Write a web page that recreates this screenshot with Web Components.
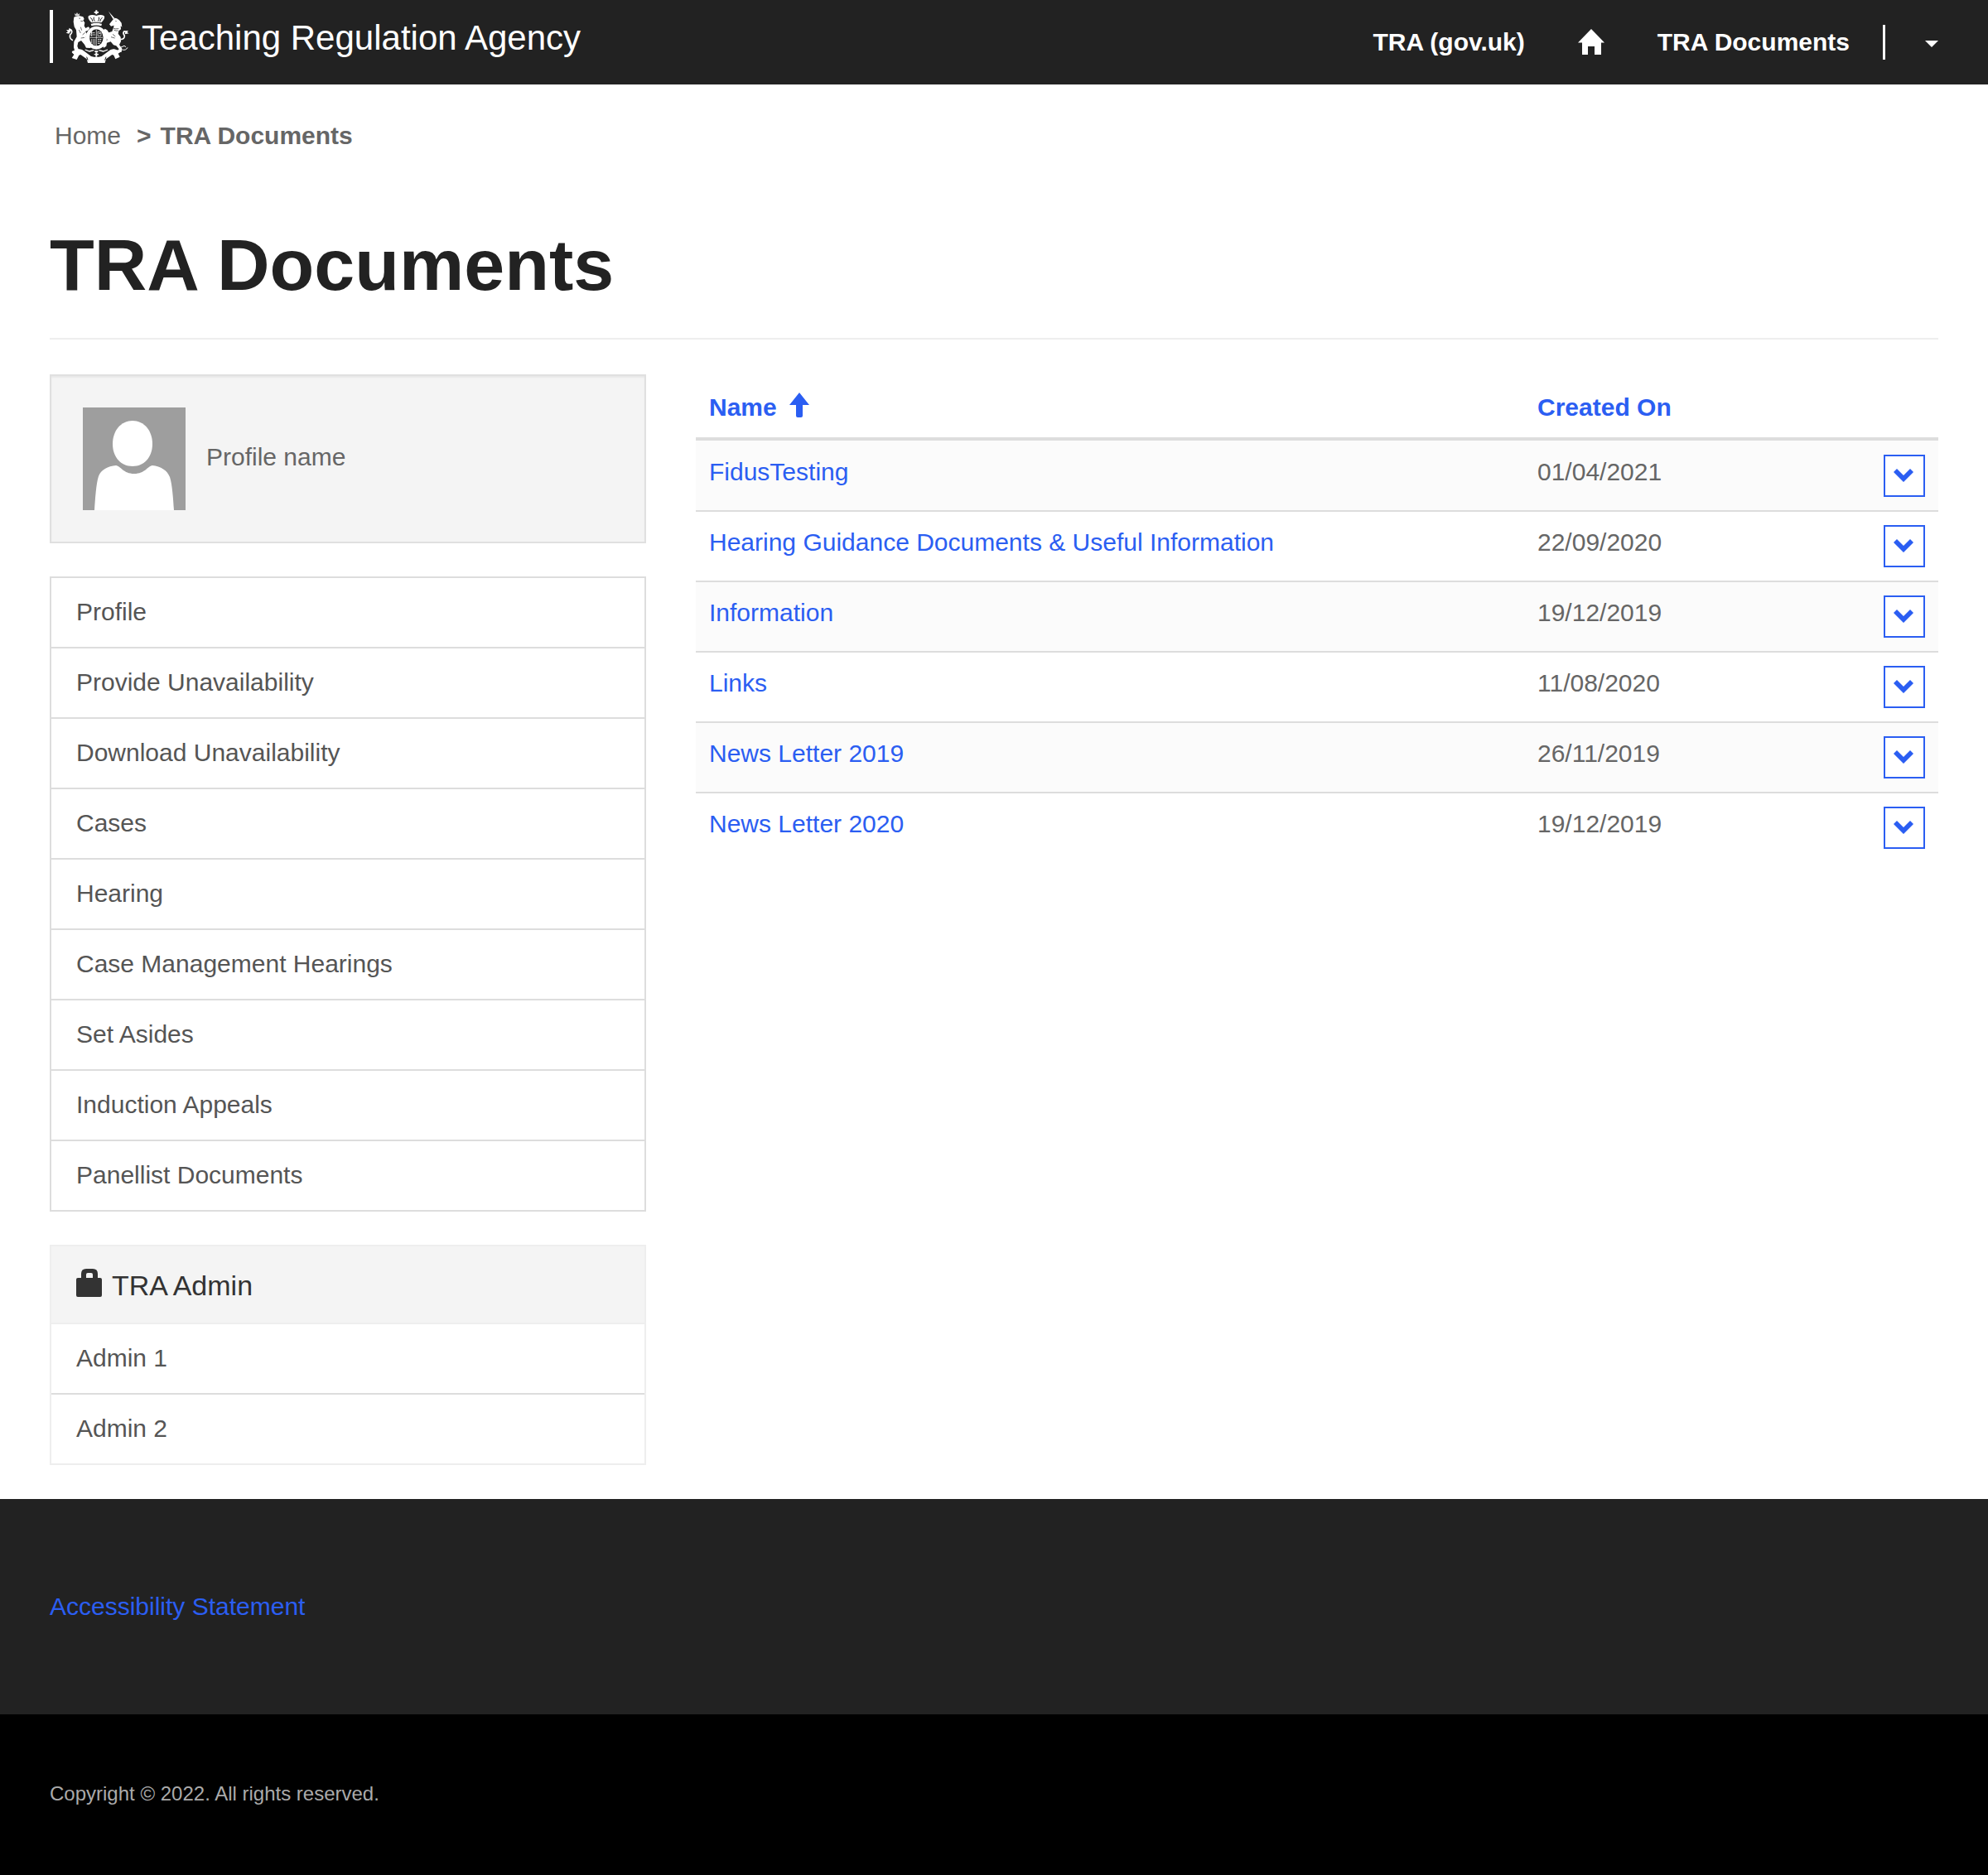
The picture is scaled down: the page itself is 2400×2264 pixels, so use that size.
<!DOCTYPE html>
<html lang="en">
<head>
<meta charset="utf-8">
<meta name="viewport" content="width=device-width, initial-scale=1">
<title>TRA Documents</title>
<style>
  :root {
    --gutter: 60px;
    --ink: #222;
    --muted: #666;
    --nav-ink: #555;
    --line: #ddd;
    --line-soft: #eee;
    --panel: #f4f4f4;
    --link: #2b5ef2;
  }
  body {
    margin: 0;
    background: #fff;
    color: var(--muted);
    font: 30px/42px "Liberation Sans", Arial, sans-serif;
  }
</style>
</head>
<body>
<tra-page>
  <tra-header slot="header"></tra-header>
  <tra-breadcrumbs parent="Home" current="TRA Documents"></tra-breadcrumbs>
  <tra-page-title>TRA Documents</tra-page-title>
  <tra-columns>
    <tra-profile-card slot="side">Profile name</tra-profile-card>
    <tra-side-nav slot="side" label="Account">
      <a href="#profile">Profile</a>
      <a href="#provide-unavailability">Provide Unavailability</a>
      <a href="#download-unavailability">Download Unavailability</a>
      <a href="#cases">Cases</a>
      <a href="#hearing">Hearing</a>
      <a href="#case-management">Case Management Hearings</a>
      <a href="#set-asides">Set Asides</a>
      <a href="#induction-appeals">Induction Appeals</a>
      <a href="#panellist-documents">Panellist Documents</a>
    </tra-side-nav>
    <tra-side-nav slot="side" label="TRA Admin" soft>
      <tra-panel-heading slot="heading">TRA Admin</tra-panel-heading>
      <a href="#admin-1">Admin 1</a>
      <a href="#admin-2">Admin 2</a>
    </tra-side-nav>
    <tra-document-table></tra-document-table>
  </tra-columns>
  <tra-footer slot="footer"></tra-footer>
</tra-page>

<script>
const define = (name, html) => customElements.define(name, class extends HTMLElement {
  constructor() {
    super();
    const template = document.createElement('template');
    template.innerHTML = typeof html === 'function' ? html(this) : html;
    this.attachShadow({ mode: 'open' }).append(template.content.cloneNode(true));
  }
});

/* Page shell: header, growing main area, footer */
define('tra-page', `
  <style>
    :host { display: flex; flex-direction: column; min-height: 100vh; }
    main { padding: 41px var(--gutter); }
    .footer { flex: 1; display: flex; flex-direction: column; }
    ::slotted([slot=footer]) { flex: 1; }
  </style>
  <slot name="header"></slot>
  <main><slot></slot></main>
  <div class="footer"><slot name="footer"></slot></div>`);

/* Royal coat of arms: lion, crowned shield, unicorn, scroll */
define('tra-crest', `
  <style>:host { display: block; } svg { display: block; width: 77px; height: 64px; }</style>
  <svg viewBox="57 36 231 192" fill="#fff" aria-hidden="true">
    <!-- crown -->
    <path d="M166 37h6v5h5v5h-5v5h-6v-5h-5v-5h5z"/>
    <path d="M151 82C141 72 136 61 142 57c8-5 19-3 27 0 8-3 19-5 27 0 6 4 1 15-9 25z"/>
    <path d="M149 86q20-6 40 0l-2 8q-18-5-36 0z"/>
    <g fill="none" stroke="#222" stroke-width="3">
      <path d="M147 64q6 1 9 14M191 64q-6 1-9 14M160 62q-3 7 3 15M178 62q3 7-3 15"/>
      <path d="M150 84q19-6 38 0" stroke-width="2"/>
    </g>
    <!-- garter and quartered shield -->
    <ellipse cx="169" cy="137" rx="38" ry="42"/>
    <ellipse cx="169" cy="136" rx="25" ry="30" fill="#222"/>
    <g stroke="#fff" stroke-width="3" fill="none">
      <path d="M169 107v59M145 136h48" stroke-width="2"/>
      <path d="M150 119h15M148 126h17M152 112v20" stroke-dasharray="5 2"/>
      <path d="M174 114l12 4v12h-12z" stroke-width="2"/>
      <path d="M178 121h6" />
      <path d="M152 141v15M158 141v20M164 141v23" stroke-width="2"/>
      <path d="M174 143h15M174 150h13M174 157h9" stroke-dasharray="5 2"/>
    </g>
    <!-- lion -->
    <path d="M90 48l5 4 4-7 4 7 6-4-2 9H92z" opacity=".8"/>
    <path d="M88 62q6-6 21-4l12 3 4 8-4 5 6 8-2 12 5 8 10-5 5 5-6 8-10 4 6 8q-6 10-3 22l8 16 10 7-2 7-16-1-6-12-12-14-11 6-3 14 6 16-3 8-18 4-5-6 10-6-3-12 1-20 10-18-2-24-7-12-3-18z"/>
    <path d="M84 146q-14-6-10-20 10-10 4-17-7-4-9 6" fill="none" stroke="#fff" stroke-width="5"/>
    <path d="M70 122l-11-3 7-4-6-7 9 1 2-8 8 6z"/>
    <g stroke="#222" fill="none" stroke-width="2">
      <path d="M106 66l5 1M112 76l8 1M112 98l4 12M106 108l6 12"/>
      <path d="M128 118l-9 8M126 136l-13 2"/>
    </g>
    <!-- unicorn -->
    <path d="M213 41l22 25-5 4z"/>
    <path d="M229 71l7-6 7 2 9 6 8 10 2 15-5-4 1 12-8 6-2 10 9 12 1 16-6 12 10 14-2 12-10 2-7-4 8-8-10-12-10-3-10-12-14 4-2 12-9 6-4-6 6-14 11-8-4-9-9-9 4-6-7-10 7-7 8 5 6 9 12-4 4-12 3-10-11 3-6-7z"/>
    <path d="M256 143q16-1 15-14-7-8-2-15 8-2 9 6" fill="none" stroke="#fff" stroke-width="5"/>
    <path d="M272 124l15-3-7-4 5-6-10 1z"/>
    <g stroke="#222" fill="none" stroke-width="2">
      <path d="M238 76l4 1M226 100q12 7 24 4M232 108q8 5 16 3"/>
      <path d="M228 124l10 8M222 134l14 4"/>
    </g>
    <path d="M256 172l14-6 6 4M262 180q14 4 20-8" fill="none" stroke="#fff" stroke-width="3"/>
    <!-- scroll and foliage -->
    <path d="M80 186l24-8q12-2 22 8l24 18q19 6 38 0l24-18q10-10 22-8l26 8-12 8 6 12-16 8-6-14-6-2-22 16-4 14q-31 10-62 0l-4-14-22-16-6 2-8 16-18-6 8-12z"/>
    <path d="M134 206l4 12M204 206l-4 12" fill="none" stroke="#222" stroke-width="3"/>
    <path d="M128 180l16 6 16-4M178 182l16 4 16-6" fill="none" stroke="#fff" stroke-width="4"/>
    <circle cx="169" cy="190" r="10" fill="#222"/>
    <path d="M163 184h12v5h-12zM166 190h6v16h-6zM161 195h16v4h-16z"/>
  </svg>`);

define('tra-header', `
  <style>
    :host { display: block; background: var(--ink); color: #fff; }
    header { display: flex; justify-content: space-between; align-items: flex-start; padding: 0 var(--gutter); min-height: 102px; }
    a { color: inherit; text-decoration: none; }
    .brand { display: flex; align-items: center; gap: 15px; margin-top: 12px; height: 64px; font-size: 42px; line-height: 48px; }
    .brand::before { content: ""; width: 4px; align-self: stretch; background: #fff; }
    .brand span { padding-top: 4px; }
    nav { display: flex; align-items: center; padding-top: 30px; font-weight: bold; }
    .home { margin: 0 64px; }
    svg { display: block; fill: currentColor; }
    button { display: flex; align-items: center; justify-content: flex-end; margin-left: 40px; height: 42px; width: 67px; padding: 4px 0 0; border: 0; border-left: 3px solid #fff; background: none; color: inherit; }
  </style>
  <header>
    <a class="brand" href="#top"><tra-crest></tra-crest><span>Teaching Regulation Agency</span></a>
    <nav aria-label="Main">
      <a href="#gov">TRA (gov.uk)</a>
      <a class="home" href="#home" aria-label="Home">
        <svg width="32" height="32" viewBox="0 0 32 32"><path d="M16 0L32 16.500H28V31H20V21H12V31H5V16.500H0z"/></svg>
      </a>
      <a href="#documents">TRA Documents</a>
      <button type="button" aria-label="Account menu">
        <svg width="16" height="8" viewBox="0 0 16 8"><path d="M0 0h16L8 8z"/></svg>
      </button>
    </nav>
  </header>`);

define('tra-breadcrumbs', el => `
  <style>
    :host { display: block; margin-bottom: 87px; padding-left: 6px; }
    ol { display: flex; list-style: none; margin: 0; padding: 0; }
    a { color: inherit; text-decoration: none; }
    li + li { font-weight: bold; }
    li + li::before { content: ">"; margin: 0 11px 0 19px; }
  </style>
  <nav aria-label="Breadcrumb"><ol>
    <li><a href="#home">${el.getAttribute('parent')}</a></li>
    <li aria-current="page">${el.getAttribute('current')}</li>
  </ol></nav>`);

define('tra-page-title', `
  <style>
    :host { display: block; margin-bottom: 42px; padding-bottom: 40px; border-bottom: 2px solid var(--line-soft); }
    h1 { margin: 0; color: var(--ink); font-size: 88px; line-height: 96px; font-weight: bold; }
  </style>
  <h1><slot></slot></h1>`);

define('tra-columns', `
  <style>
    :host { display: grid; grid-template-columns: minmax(0, 12fr) minmax(0, 25fr); gap: 60px; align-items: start; }
    aside { display: flex; flex-direction: column; gap: 40px; }
  </style>
  <aside><slot name="side"></slot></aside>
  <section><slot></slot></section>`);

define('tra-profile-card', `
  <style>
    :host { display: flex; align-items: center; gap: 25px; padding: 38px; border: 2px solid #e0e0e0; background: var(--panel); box-shadow: inset 0 2px 2px rgba(0, 0, 0, .05); }
    svg { display: block; width: 124px; height: 124px; }
    span { padding-bottom: 4px; }
  </style>
  <svg viewBox="0 0 124 124" role="img" aria-label="Avatar">
    <path fill="#9e9e9e" d="M0 0h124v124H0z"/>
    <path fill="#fff" d="M60 16c14 0 24 12 24 28S74 71 60 71 36 60 36 44s10-28 24-28z"/>
    <path fill="#fff" d="M14 124c1-14 2-32 5-41 3-8 11-12 21-13 6 1 9 10 22 10s16-9 22-10c10 1 18 6 21 14 3 9 4 26 5 40z"/>
  </svg>
  <span><slot></slot></span>`);

define('tra-side-nav', el => `
  <style>
    :host { display: block; border: 2px solid var(--line); }
    :host([soft]) { border-color: var(--line-soft); }
    ::slotted(a) { display: block; padding: 20px 30px 21px; color: var(--nav-ink); text-decoration: none; }
    ::slotted(a:not(:last-child)) { border-bottom: 2px solid var(--line); }
  </style>
  <slot name="heading"></slot>
  <nav aria-label="${el.getAttribute('label')}"><slot></slot></nav>`);

define('tra-panel-heading', `
  <style>
    :host { display: block; background: var(--panel); border-bottom: 2px solid var(--line-soft); }
    h2 { display: flex; align-items: flex-start; gap: 11px; margin: 0; padding: 23px 30px 21px; color: #333; font-size: 34px; line-height: 48px; font-weight: normal; }
    svg { display: block; margin-top: 4px; fill: currentColor; }
  </style>
  <h2>
    <svg width="32" height="34" viewBox="0 0 32 34" aria-hidden="true"><path fill-rule="evenodd" d="M6 11V6q0-6 6-6h8q6 0 6 6v5h3q2 0 2 2v19q0 2-2 2H2q-2 0-2-2V13q0-2 2-2zM12 11h8V7q0-2-2-2h-4q-2 0-2 2z"/></svg>
    <slot></slot>
  </h2>`);

const documents = [
  ['FidusTesting', '01/04/2021'],
  ['Hearing Guidance Documents &amp; Useful Information', '22/09/2020'],
  ['Information', '19/12/2019'],
  ['Links', '11/08/2020'],
  ['News Letter 2019', '26/11/2019'],
  ['News Letter 2020', '19/12/2019'],
];

define('tra-document-table', () => `
  <style>
    :host { display: block; }
    table { width: 100%; border-spacing: 0; table-layout: fixed; }
    .name { width: 66.667%; }
    .actions { width: 6%; }
    th, td { padding: 16px; text-align: left; vertical-align: top; }
    th { padding: 19px 16px 15px; border-bottom: 4px solid var(--line); }
    a { color: var(--link); text-decoration: none; }
    th a { display: inline-flex; gap: 15px; vertical-align: top; }
    th svg { margin-top: 3px; }
    tbody tr:nth-child(odd) { background: #fbfbfb; }
    tbody tr:first-child td { padding-top: 17px; }
    tbody tr + tr td { border-top: 2px solid var(--line); }
    td:last-child { text-align: right; }
    svg { display: block; fill: currentColor; }
    button { display: inline-flex; justify-content: center; vertical-align: top; width: 50px; height: 51px; padding: 15px 2px 0 0; border: 2px solid var(--link); background: #fff; color: var(--link); }
  </style>
  <table>
    <colgroup><col class="name"><col><col class="actions"></colgroup>
    <thead><tr>
      <th scope="col" aria-sort="ascending"><a href="#sort-name">Name<svg width="24" height="30" viewBox="0 0 24 30" aria-hidden="true"><path d="M12 0L24 15H16V28q0 2-2 2H10q-2 0-2-2V15H0z"/></svg></a></th>
      <th scope="col"><a href="#sort-created">Created On</a></th>
      <th></th>
    </tr></thead>
    <tbody>${documents.map(([name, date]) => `
      <tr>
        <td><a href="#document">${name}</a></td>
        <td>${date}</td>
        <td><button type="button" aria-label="Actions for ${name}"><svg width="24" height="16" viewBox="0 0 24 16"><path d="M4 0l8 8 8-8 4 4-12 12L0 4z"/></svg></button></td>
      </tr>`).join('')}
    </tbody>
  </table>`);

define('tra-footer', `
  <style>
    :host { display: flex; flex-direction: column; background: #000; }
    .links { padding: 109px var(--gutter); background: var(--ink); }
    a { color: var(--link); text-decoration: none; }
    p { margin: 0; padding: 79px var(--gutter) 81px; color: #aaa; font-size: 24px; line-height: 34px; }
  </style>
  <footer>
    <div class="links"><a href="#accessibility">Accessibility Statement</a></div>
    <p>Copyright © 2022. All rights reserved.</p>
  </footer>`);
</script>
</body>
</html>
